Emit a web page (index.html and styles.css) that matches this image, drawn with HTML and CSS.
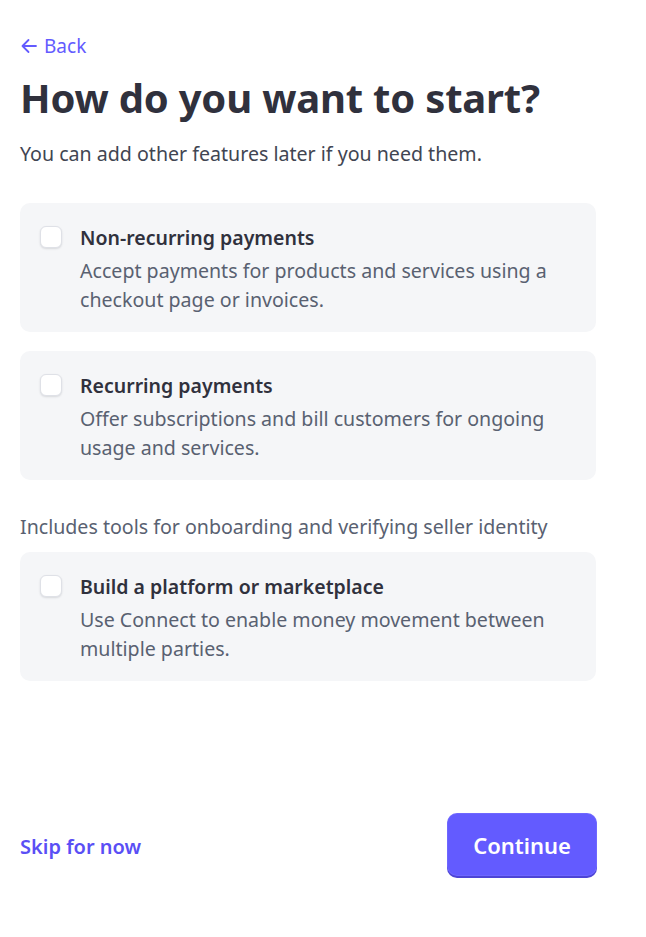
FILE: index.html
```html
<!DOCTYPE html>
<html lang="en">
<head>
<meta charset="utf-8">
<title>How do you want to start?</title>
<link rel="stylesheet" href="styles.css">
</head>
<body>
<div class="page">
  <main class="content">
    <a class="back" href="#">
      <svg class="back-icon" width="18" height="18" viewBox="0 0 18 18" fill="none" stroke="currentColor" stroke-width="1.8" stroke-linecap="round" stroke-linejoin="round"><path d="M16 9H2.5M8.5 3L2.5 9l6 6"/></svg>
      <span>Back</span>
    </a>
    <h1 class="title">How do you want to start?</h1>
    <p class="subtitle">You can add other features later if you need them.</p>

    <div class="options">
      <label class="option">
        <span class="checkbox"></span>
        <span class="option-text">
          <span class="option-title">Non-recurring payments</span>
          <span class="option-desc">Accept payments for products and services using a checkout page or invoices.</span>
        </span>
      </label>
      <label class="option">
        <span class="checkbox"></span>
        <span class="option-text">
          <span class="option-title">Recurring payments</span>
          <span class="option-desc">Offer subscriptions and bill customers for ongoing usage and services.</span>
        </span>
      </label>
    </div>

    <p class="group-note">Includes tools for onboarding and verifying seller identity</p>

    <div class="options">
      <label class="option">
        <span class="checkbox"></span>
        <span class="option-text">
          <span class="option-title">Build a platform or marketplace</span>
          <span class="option-desc">Use Connect to enable money movement between multiple parties.</span>
        </span>
      </label>
    </div>
  </main>

  <footer class="footer">
    <a class="skip" href="#">Skip for now</a>
    <button class="continue" type="button">Continue</button>
  </footer>
</div>
</body>
</html>
```

FILE: styles.css
```css
* { box-sizing: border-box; }
html, body { margin: 0; padding: 0; background: #fff; }
body {
  font-family: "Noto Sans", "Open Sans", "DejaVu Sans", sans-serif;
  color: #30313d;
}
.page {
  min-height: 937px;
  width: 576px;
  margin-left: 20px;
  display: flex;
  flex-direction: column;
}
.content { padding-top: 32px; }
.back {
  display: inline-flex;
  align-items: center;
  gap: 6px;
  color: #635bff;
  text-decoration: none;
  font-size: 19px;
  line-height: 28px;
}
.back-icon { display: block; }
.title {
  margin: 12px 0 0;
  font-size: 40px;
  line-height: 52px;
  font-weight: 700;
  letter-spacing: -0.2px;
  color: #30313d;
}
.subtitle {
  margin: 16px 0 0;
  font-size: 19.6px;
  line-height: 28px;
  color: #414552;
}
.options {
  display: flex;
  flex-direction: column;
  gap: 19px;
  margin-top: 35px;
}
.option {
  display: flex;
  gap: 18px;
  align-items: flex-start;
  background: #f5f6f8;
  border-radius: 10px;
  padding: 21px 20px 16px;
  min-height: 129px;
  cursor: pointer;
}
.checkbox {
  flex: none;
  width: 22px;
  height: 22px;
  margin-top: 2px;
  background: #fff;
  border-radius: 6px;
  border: 1px solid #dfe1e7;
  box-shadow: 0 1px 2px rgba(64, 68, 82, 0.16);
}
.option-text { display: flex; flex-direction: column; gap: 4px; }
.option-title {
  font-size: 19.5px;
  line-height: 28px;
  font-weight: 600;
  color: #30313d;
}
.option-desc {
  font-size: 19.6px;
  line-height: 29px;
  color: #596171;
}
.group-note {
  margin: 33px 0 0;
  font-size: 19.6px;
  line-height: 28px;
  color: #596171;
}
.group-note + .options { margin-top: 11px; }
.footer {
  margin-top: auto;
  padding-bottom: 61px;
  display: flex;
  align-items: center;
  justify-content: space-between;
}
.skip {
  color: #5a4ff5;
  font-size: 20px;
  font-weight: 600;
  text-decoration: none;
  padding-top: 3px;
}
.continue {
  width: 150px;
  height: 63px;
  margin-right: -1px;
  border: none;
  border-radius: 10px;
  background: #635bff;
  color: #fff;
  font-family: inherit;
  font-size: 22px;
  font-weight: 600;
  box-shadow: 0 2px 0 #4d44d6, inset 0 0 0 1px rgba(255,255,255,0.08);
  cursor: pointer;
}
```
